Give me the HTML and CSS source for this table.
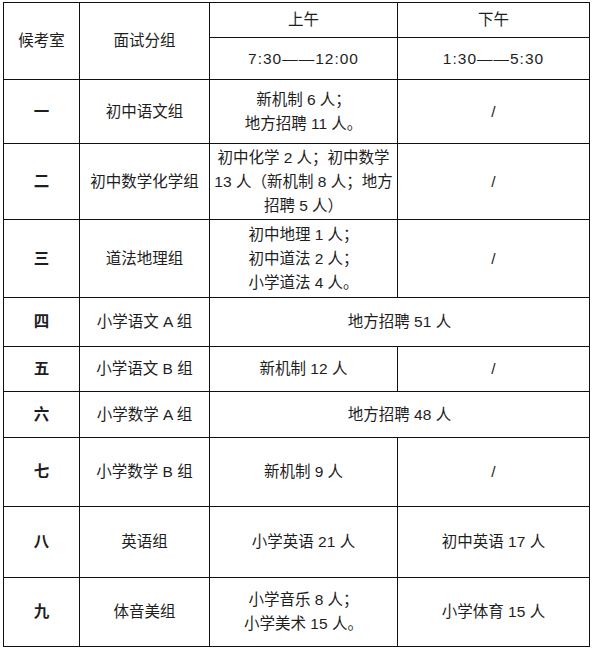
FILE: index.html
```html
<!DOCTYPE html>
<html lang="zh">
<head>
<meta charset="utf-8">
<link rel="stylesheet" href="styles.css">
</head>
<body>
<table class="sched">
  <colgroup>
    <col class="c1"><col class="c2"><col class="c3"><col class="c4">
  </colgroup>
  <tr class="h1">
    <td rowspan="2">候考室</td>
    <td rowspan="2">面试分组</td>
    <td>上午</td>
    <td>下午</td>
  </tr>
  <tr class="h2">
    <td class="time">7:30——12:00</td>
    <td class="time">1:30——5:30</td>
  </tr>
  <tr class="r1">
    <td class="num">一</td>
    <td>初中语文组</td>
    <td>新机制 6 人；<br>地方招聘 11 人。</td>
    <td class="slash">/</td>
  </tr>
  <tr class="r2">
    <td class="num">二</td>
    <td>初中数学化学组</td>
    <td>初中化学 2 人；初中数学<br>13 人（新机制 8 人；地方<br>招聘 5 人）</td>
    <td class="slash">/</td>
  </tr>
  <tr class="r3">
    <td class="num">三</td>
    <td>道法地理组</td>
    <td>初中地理 1 人；<br>初中道法 2 人；<br>小学道法 4 人。</td>
    <td class="slash">/</td>
  </tr>
  <tr class="r4">
    <td class="num">四</td>
    <td>小学语文 A 组</td>
    <td colspan="2">地方招聘 51 人</td>
  </tr>
  <tr class="r5">
    <td class="num">五</td>
    <td>小学语文 B 组</td>
    <td>新机制 12 人</td>
    <td class="slash">/</td>
  </tr>
  <tr class="r6">
    <td class="num">六</td>
    <td>小学数学 A 组</td>
    <td colspan="2">地方招聘 48 人</td>
  </tr>
  <tr class="r7">
    <td class="num">七</td>
    <td>小学数学 B 组</td>
    <td>新机制 9 人</td>
    <td class="slash">/</td>
  </tr>
  <tr class="r8">
    <td class="num">八</td>
    <td>英语组</td>
    <td>小学英语 21 人</td>
    <td>初中英语 17 人</td>
  </tr>
  <tr class="r9">
    <td class="num">九</td>
    <td>体音美组</td>
    <td>小学音乐 8 人；<br>小学美术 15 人。</td>
    <td>小学体育 15 人</td>
  </tr>
</table>
</body>
</html>
```
FILE: styles.css
```css
html, body {
  margin: 0;
  padding: 0;
  background: #ffffff;
}

body {
  padding: 2px 0 0 3px;
}

.sched {
  border-collapse: collapse;
  table-layout: fixed;
  width: 586px;
  font-family: "Liberation Sans", "Noto Sans CJK SC", sans-serif;
  font-size: 15.5px;
  line-height: 24px;
  color: #1e1e1e;
}

.c1 { width: 76px; }
.c2 { width: 130px; }
.c3 { width: 188px; }
.c4 { width: 192px; }

.sched td {
  border: 1.5px solid #111;
  text-align: center;
  vertical-align: middle;
  padding: 0;
  white-space: nowrap;
}

.h1 { height: 35px; }
.h2 { height: 42px; }
.r1 { height: 64px; }
.r2 { height: 76px; }
.r3 { height: 78px; }
.r4 { height: 49px; }
.r5 { height: 45px; }
.r6 { height: 46px; }
.r7 { height: 69px; }
.r8 { height: 71px; }
.r9 { height: 69px; }

.time {
  letter-spacing: 1px;
}

.num {
  font-weight: 600;
}

.slash {
  font-weight: 300;
}
```
